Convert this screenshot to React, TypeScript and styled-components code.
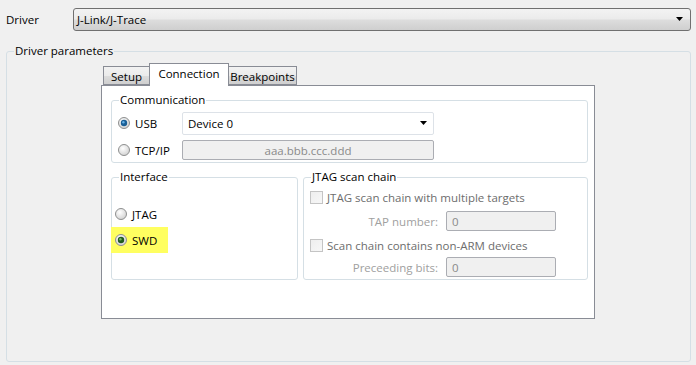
import React from "react";
import styled, { createGlobalStyle } from "styled-components";

const Global = createGlobalStyle`
  html, body { margin: 0; padding: 0; background: #f0f0f0; }
  body { font-family: "Open Sans", "Noto Sans", sans-serif; font-size: 11.5px; color: #000; }
`;

const Page = styled.div`
  width: 696px;
  height: 365px;
  box-sizing: border-box;
  padding: 8px 5px 0 6px;
  display: flex;
  flex-direction: column;
`;

const DriverRow = styled.div`
  display: flex;
  align-items: center;
  height: 23px;
`;

const Label = styled.span`
  width: 67px;
`;

const Combo = styled.div`
  flex: 1;
  height: 23px;
  box-sizing: border-box;
  border: 1px solid #707070;
  border-radius: 3px;
  background: linear-gradient(#f3f3f3 0%, #ebebeb 48%, #dddddd 52%, #cfcfcf 100%);
  display: flex;
  align-items: center;
  padding: 0 6px 0 3px;
  justify-content: space-between;
`;

const WhiteCombo = styled.div`
  width: 252px;
  height: 23px;
  box-sizing: border-box;
  border: 1px solid #dde2e8;
  border-radius: 2px;
  background: #fff;
  display: flex;
  align-items: center;
  justify-content: space-between;
  padding: 0 5px 0 5px;
`;

const Arrow = () => (
  <svg width="8" height="5" viewBox="0 0 8 5">
    <path d="M0 0 H7 L3.5 4 Z" fill="#000" />
  </svg>
);

const Group = styled.div<{ $bg: string; $w?: number; $h: number }>`
  position: relative;
  box-sizing: border-box;
  border: 1px solid #d5dfe5;
  border-radius: 3px;
  width: ${(p) => (p.$w ? `${p.$w}px` : "auto")};
  height: ${(p) => p.$h}px;
  --legend-bg: ${(p) => p.$bg};
`;

const Legend = styled.span`
  position: absolute;
  top: -9px;
  left: 7px;
  padding: 0 1px;
  line-height: 16px;
  background: var(--legend-bg);
  white-space: nowrap;
`;

const OuterGroup = styled(Group)`
  margin-top: 20px;
  width: 685px;
  padding: 11px 0 0 94px;
`;

const TabStrip = styled.div`
  display: flex;
  align-items: flex-end;
  height: 22px;
  margin-left: 2px;
`;

const Tab = styled.div<{ $w: number; $active?: boolean }>`
  box-sizing: border-box;
  width: ${(p) => p.$w}px;
  height: ${(p) => (p.$active ? 23 : 19)}px;
  margin-bottom: ${(p) => (p.$active ? -1 : 0)}px;
  position: relative;
  z-index: ${(p) => (p.$active ? 2 : 1)};
  border: 1px solid #898c95;
  border-bottom: ${(p) => (p.$active ? "none" : "1px solid #898c95")};
  margin-left: ${(p) => (p.$active ? -1 : 0)}px;
  margin-right: ${(p) => (p.$active ? -1 : 0)}px;
  background: ${(p) =>
    p.$active ? "#fff" : "linear-gradient(#f2f2f2 0%, #ebebeb 50%, #dddddd 51%, #cfcfcf 100%)"};
  display: flex;
  align-items: center;
  justify-content: center;
  padding-bottom: ${(p) => (p.$active ? 3 : 0)}px;
  padding-top: ${(p) => (p.$active ? 0 : 1)}px;
`;

const Panel = styled.div`
  box-sizing: border-box;
  width: 494px;
  height: 234px;
  border: 1px solid #898c95;
  background: #fff;
  padding: 14px 6px 0 9px;
  display: flex;
  flex-direction: column;
`;

const CommBody = styled.div`
  padding: 11px 0 0 6px;
  display: flex;
  flex-direction: column;
  gap: 6px;
`;

const Row = styled.div<{ $h: number }>`
  display: flex;
  align-items: center;
  height: ${(p) => p.$h}px;
`;

const RadioLabel = styled.label<{ $w?: number }>`
  display: flex;
  align-items: center;
  gap: 5px;
  width: ${(p) => (p.$w ? `${p.$w}px` : "auto")};
`;

const Field = styled.div<{ $w: number; $center?: boolean }>`
  box-sizing: border-box;
  width: ${(p) => p.$w}px;
  height: 20px;
  border: 1px solid #abadb3;
  border-radius: 2px;
  background: #f0f0f0;
  color: #8a8a8a;
  display: flex;
  align-items: center;
  justify-content: ${(p) => (p.$center ? "center" : "flex-start")};
  padding-left: ${(p) => (p.$center ? 0 : 5)}px;
`;

const LowerRow = styled.div`
  display: flex;
  gap: 5px;
  margin-top: 14px;
`;

const IfaceBody = styled.div`
  padding-top: 23px;
  display: flex;
  flex-direction: column;
`;

const IfaceRow = styled.div<{ $hl?: boolean }>`
  width: 57px;
  height: 26px;
  box-sizing: border-box;
  padding-left: 4px;
  display: flex;
  align-items: center;
  background: ${(p) => (p.$hl ? "#ffff60" : "transparent")};
  margin-left: -1px;
`;

const ScanBody = styled.div`
  padding: 11px 0 0 6px;
  display: flex;
  flex-direction: column;
`;

const CheckRow = styled.div<{ $mt: number }>`
  display: flex;
  align-items: center;
  gap: 4px;
  height: 16px;
  margin-top: ${(p) => p.$mt}px;
  color: #6d6d6d;
`;

const Box = styled.span`
  width: 13px;
  height: 13px;
  box-sizing: border-box;
  border: 1px solid #c4c4c4;
  background: linear-gradient(135deg, #eeeeee, #f7f7f7);
  display: inline-block;
`;

const InputRow = styled.div<{ $mt: number }>`
  display: flex;
  align-items: center;
  gap: 8px;
  margin-top: ${(p) => p.$mt}px;
  height: 20px;
`;

const InputLabel = styled.span`
  width: 128px;
  text-align: right;
  color: #a0a0a0;
`;

const Radio = ({ checked, tint }: { checked?: boolean; tint?: string }) => (
  <svg width="12" height="12" viewBox="0 0 12 12">
    <defs>
      <radialGradient id={`rg${tint ?? "n"}${checked ? 1 : 0}`} cx="0.4" cy="0.35" r="0.7">
        <stop offset="0" stopColor="#ffffff" />
        <stop offset="1" stopColor="#d0d0d0" />
      </radialGradient>
    </defs>
    <circle cx="6" cy="6" r="5.5" fill={`url(#rg${tint ?? "n"}${checked ? 1 : 0})`} stroke="#8e8f8f" strokeWidth="1" />
    {checked && (
      <>
        <circle cx="6" cy="6" r="3.2" fill={tint === "g" ? "#1f5a1c" : "#1a5f96"} />
        <circle cx="5.4" cy="5.2" r="1.2" fill={tint === "g" ? "#6fb860" : "#67b2e8"} />
      </>
    )}
  </svg>
);

export default function App() {
  return (
    <>
      <Global />
      <Page>
        <DriverRow>
          <Label>Driver</Label>
          <Combo>
            <span>J-Link/J-Trace</span>
            <Arrow />
          </Combo>
        </DriverRow>
        <OuterGroup $bg="#f0f0f0" $h={311}>
          <Legend>Driver parameters</Legend>
          <TabStrip>
            <Tab $w={47}>Setup</Tab>
            <Tab $w={80} $active>Connection</Tab>
            <Tab $w={69}>Breakpoints</Tab>
          </TabStrip>
          <Panel>
            <Group $bg="#fff" $h={63}>
              <Legend>Communication</Legend>
              <CommBody>
                <Row $h={22}>
                  <RadioLabel $w={64}>
                    <Radio checked />
                    USB
                  </RadioLabel>
                  <WhiteCombo>
                    <span>Device 0</span>
                    <Arrow />
                  </WhiteCombo>
                </Row>
                <Row $h={20}>
                  <RadioLabel $w={64}>
                    <Radio />
                    TCP/IP
                  </RadioLabel>
                  <Field $w={252} $center>
                    aaa.bbb.ccc.ddd
                  </Field>
                </Row>
              </CommBody>
            </Group>
            <LowerRow>
              <Group $bg="#fff" $w={187} $h={103}>
                <Legend>Interface</Legend>
                <IfaceBody>
                  <IfaceRow>
                    <RadioLabel>
                      <Radio />
                      JTAG
                    </RadioLabel>
                  </IfaceRow>
                  <IfaceRow $hl>
                    <RadioLabel>
                      <Radio checked tint="g" />
                      SWD
                    </RadioLabel>
                  </IfaceRow>
                </IfaceBody>
              </Group>
              <Group $bg="#fff" $w={285} $h={103}>
                <Legend>JTAG scan chain</Legend>
                <ScanBody>
                  <CheckRow $mt={0}>
                    <Box />
                    JTAG scan chain with multiple targets
                  </CheckRow>
                  <InputRow $mt={6}>
                    <InputLabel>TAP number:</InputLabel>
                    <Field $w={110}>0</Field>
                  </InputRow>
                  <CheckRow $mt={6}>
                    <Box />
                    Scan chain contains non-ARM devices
                  </CheckRow>
                  <InputRow $mt={4}>
                    <InputLabel>Preceeding bits:</InputLabel>
                    <Field $w={110}>0</Field>
                  </InputRow>
                </ScanBody>
              </Group>
            </LowerRow>
          </Panel>
        </OuterGroup>
      </Page>
    </>
  );
}
